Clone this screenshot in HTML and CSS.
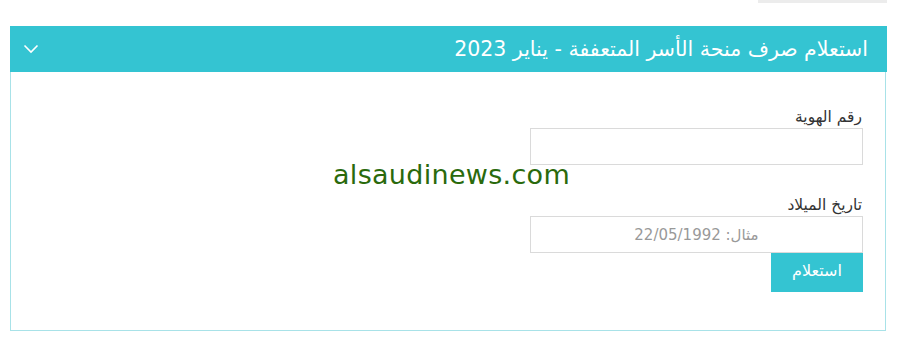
FILE: index.html
```html
<!DOCTYPE html>
<html lang="ar">
<head>
<meta charset="utf-8">
<link rel="stylesheet" href="styles.css">
</head>
<body>
<div class="topbar"><div class="greybox"></div></div>
<div class="panel">
  <div class="panel-head" dir="rtl">
    <span class="title">استعلام صرف منحة الأسر المتعففة - يناير 2023</span>
    <svg class="chev" width="16" height="10" viewBox="0 0 16 10"><path d="M1.5 1.5 L8 8 L14.5 1.5" fill="none" stroke="#fff" stroke-width="1.6"/></svg>
  </div>
  <div class="panel-body">
    <form class="form" dir="rtl">
      <label class="lbl">رقم الهوية</label>
      <input class="inp" type="text">
      <label class="lbl lbl2">تاريخ الميلاد</label>
      <input class="inp inp-center" type="text" placeholder="مثال: 22/05/1992">
      <button class="btn" type="button">استعلام</button>
    </form>
    <div class="watermark">alsaudinews.com</div>
  </div>
</div>
</body>
</html>
```

FILE: styles.css
```css
html, body { margin: 0; padding: 0; background: #fff; }
body { width: 904px; height: 346px; overflow: hidden; font-family: "DejaVu Sans", "Noto Sans", sans-serif; }
.topbar { display: flex; justify-content: flex-end; padding-right: 17px; height: 3px; }
.greybox { width: 129px; height: 3px; background: #ececec; }
.panel { margin: 23px 0 0 10px; width: 877px; }
.panel-head { height: 46px; background: #34c4d2; display: flex; align-items: center; justify-content: space-between; padding: 0 19px 0 13px; box-sizing: border-box; }
.title { color: #fff; font-size: 20.5px; font-family: "DejaVu Sans", sans-serif; letter-spacing: -0.2px; line-height: 46px; }
.chev { display: block; }
.panel-body { position: relative; height: 259px; box-sizing: border-box; border: 1px solid #a8e2e8; border-top: none; width: 876px; padding: 35px 22px 0 0; display: flex; justify-content: flex-end; }
.form { width: 333px; display: flex; flex-direction: column; align-items: stretch; }
.lbl { font-size: 15.5px; color: #333; text-align: right; height: 20px; line-height: 20px; margin-right: 1px; }
.lbl2 { margin-top: 30px; }
.inp { height: 37px; box-sizing: border-box; border: 1px solid #dadada; margin: 0; padding: 0 10px; font-size: 15px; font-family: "DejaVu Sans", sans-serif; background: #fff; }
.inp::placeholder { color: #999; }
.inp-center { text-align: center; }
.lbl + .inp { margin-top: 1px; }
.btn { align-self: flex-start; width: 92px; height: 39px; border: none; background: #34c4d2; color: #fff; font-size: 16px; font-family: "DejaVu Sans", sans-serif; margin: 0; padding: 0 0 4px; }
.watermark { position: absolute; left: 322px; top: 87px; font-family: "Comic Sans MS", "DejaVu Sans", sans-serif; font-size: 27px; color: #2a6a0c; letter-spacing: 0.3px; }
```
